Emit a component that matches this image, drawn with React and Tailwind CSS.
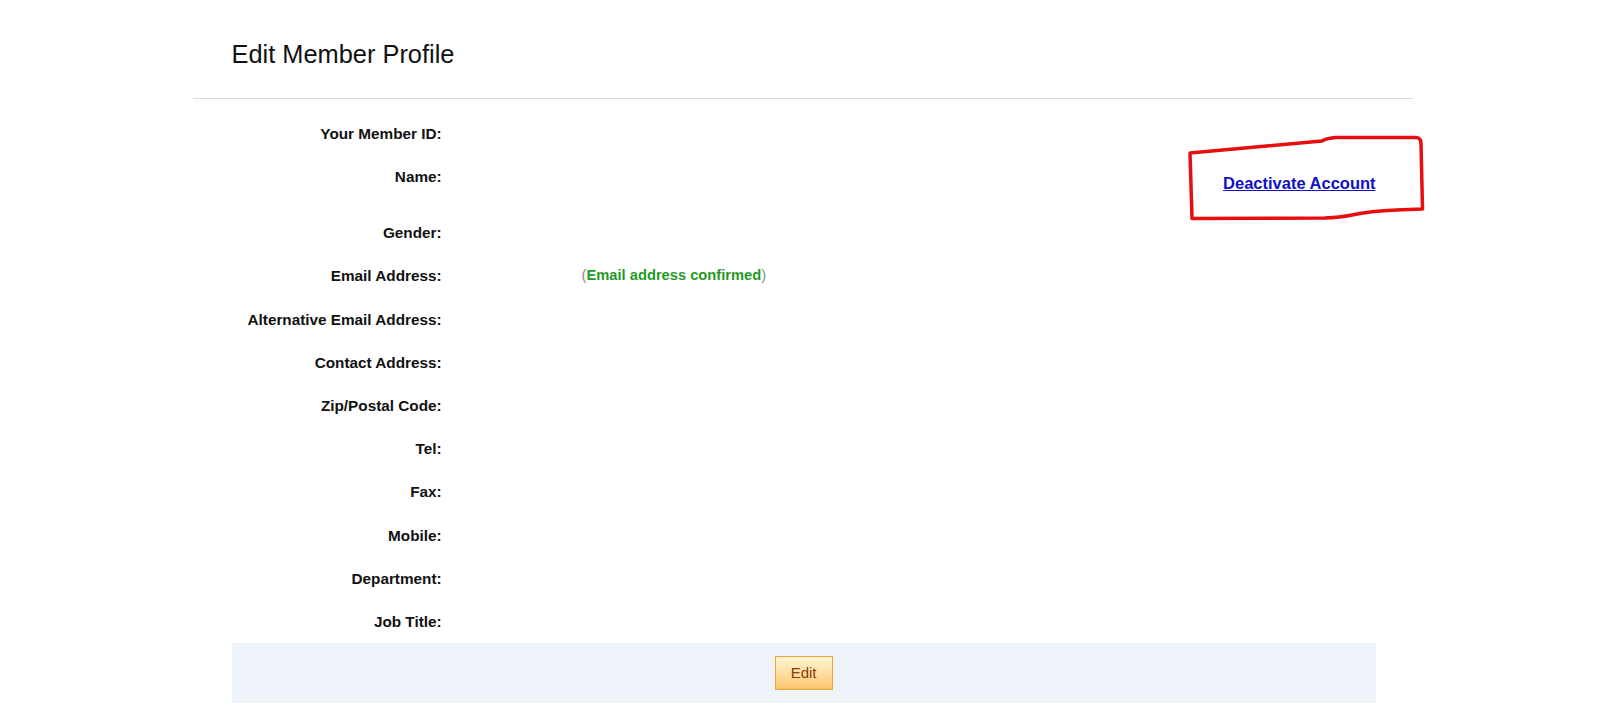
import React from 'react';

const fields = [
  { label: 'Your Member ID:' },
  { label: 'Name:', tall: true, link: true },
  { label: 'Gender:' },
  { label: 'Email Address:', confirmed: true },
  { label: 'Alternative Email Address:' },
  { label: 'Contact Address:' },
  { label: 'Zip/Postal Code:' },
  { label: 'Tel:' },
  { label: 'Fax:' },
  { label: 'Mobile:' },
  { label: 'Department:' },
  { label: 'Job Title:' },
];

export default function App() {
  return (
    <div className="relative min-h-[717px] w-full bg-white font-['Liberation_Sans',Arial,sans-serif] text-[#111]">
      <div className="ml-[193px] w-[1220px]">
        {/* Header */}
        <div className="pt-[40px] pl-[38.5px] h-[98px]">
          <h1 className="text-[25.4px] leading-[28px] font-normal">Edit Member Profile</h1>
        </div>
        <div className="h-px bg-[#dadada]"></div>

        {/* Profile rows */}
        <div className="ml-[38.6px] w-[1144px] mt-[13px]">
          {fields.map((f) => (
            <div
              key={f.label}
              className={`flex items-start ${f.tall ? 'h-[56px]' : 'h-[43.2px]'}`}
            >
              <div className="w-[216px] pr-[6px] h-[43.2px] flex items-center justify-end shrink-0">
                <span className="text-[15.3px] leading-[17px] font-bold text-right">{f.label}</span>
              </div>
              <div className="flex-1 h-full flex items-start">
                {f.confirmed && (
                  <div className="h-[43.2px] flex items-center ml-[134px] text-[14.7px] leading-[17px]">
                    <span className="text-[#8a8a8a]">(</span>
                    <span className="font-bold text-[#1f9a1f]">Email address confirmed</span>
                    <span className="text-[#8a8a8a]">)</span>
                  </div>
                )}
                {f.link && (
                  <div className="h-full w-full flex items-center justify-end">
                    <a href="#" className="text-[16.5px] leading-[19px] font-bold text-[#1010c8] underline">
                      Deactivate Account
                    </a>
                  </div>
                )}
              </div>
            </div>
          ))}

          {/* Action bar */}
          <div className="h-[60px] bg-[#eff3fa] flex items-center justify-center">
            <button className="w-[58px] h-[34px] border border-[#f0a53c] bg-linear-to-b from-[#fff6d4] to-[#fbc66a] text-[15px] text-[#8a3a10]">
              Edit
            </button>
          </div>
        </div>
      </div>

      {/* Hand-drawn annotation around the link */}
      <svg
        className="absolute top-0 left-0 pointer-events-none"
        width="1600"
        height="717"
        viewBox="0 0 1600 717"
      >
        <path
          d="M1190 153 L1322 141 Q1327 138 1336 137.5 L1416 137.5 Q1421 138 1421 143 L1422.5 209 L1396 210 Q1370 211 1352 215 Q1340 217.5 1325 218 L1192 218.5 Z"
          fill="none"
          stroke="#e60e0e"
          strokeWidth="3.5"
          strokeLinejoin="round"
        />
      </svg>
    </div>
  );
}
